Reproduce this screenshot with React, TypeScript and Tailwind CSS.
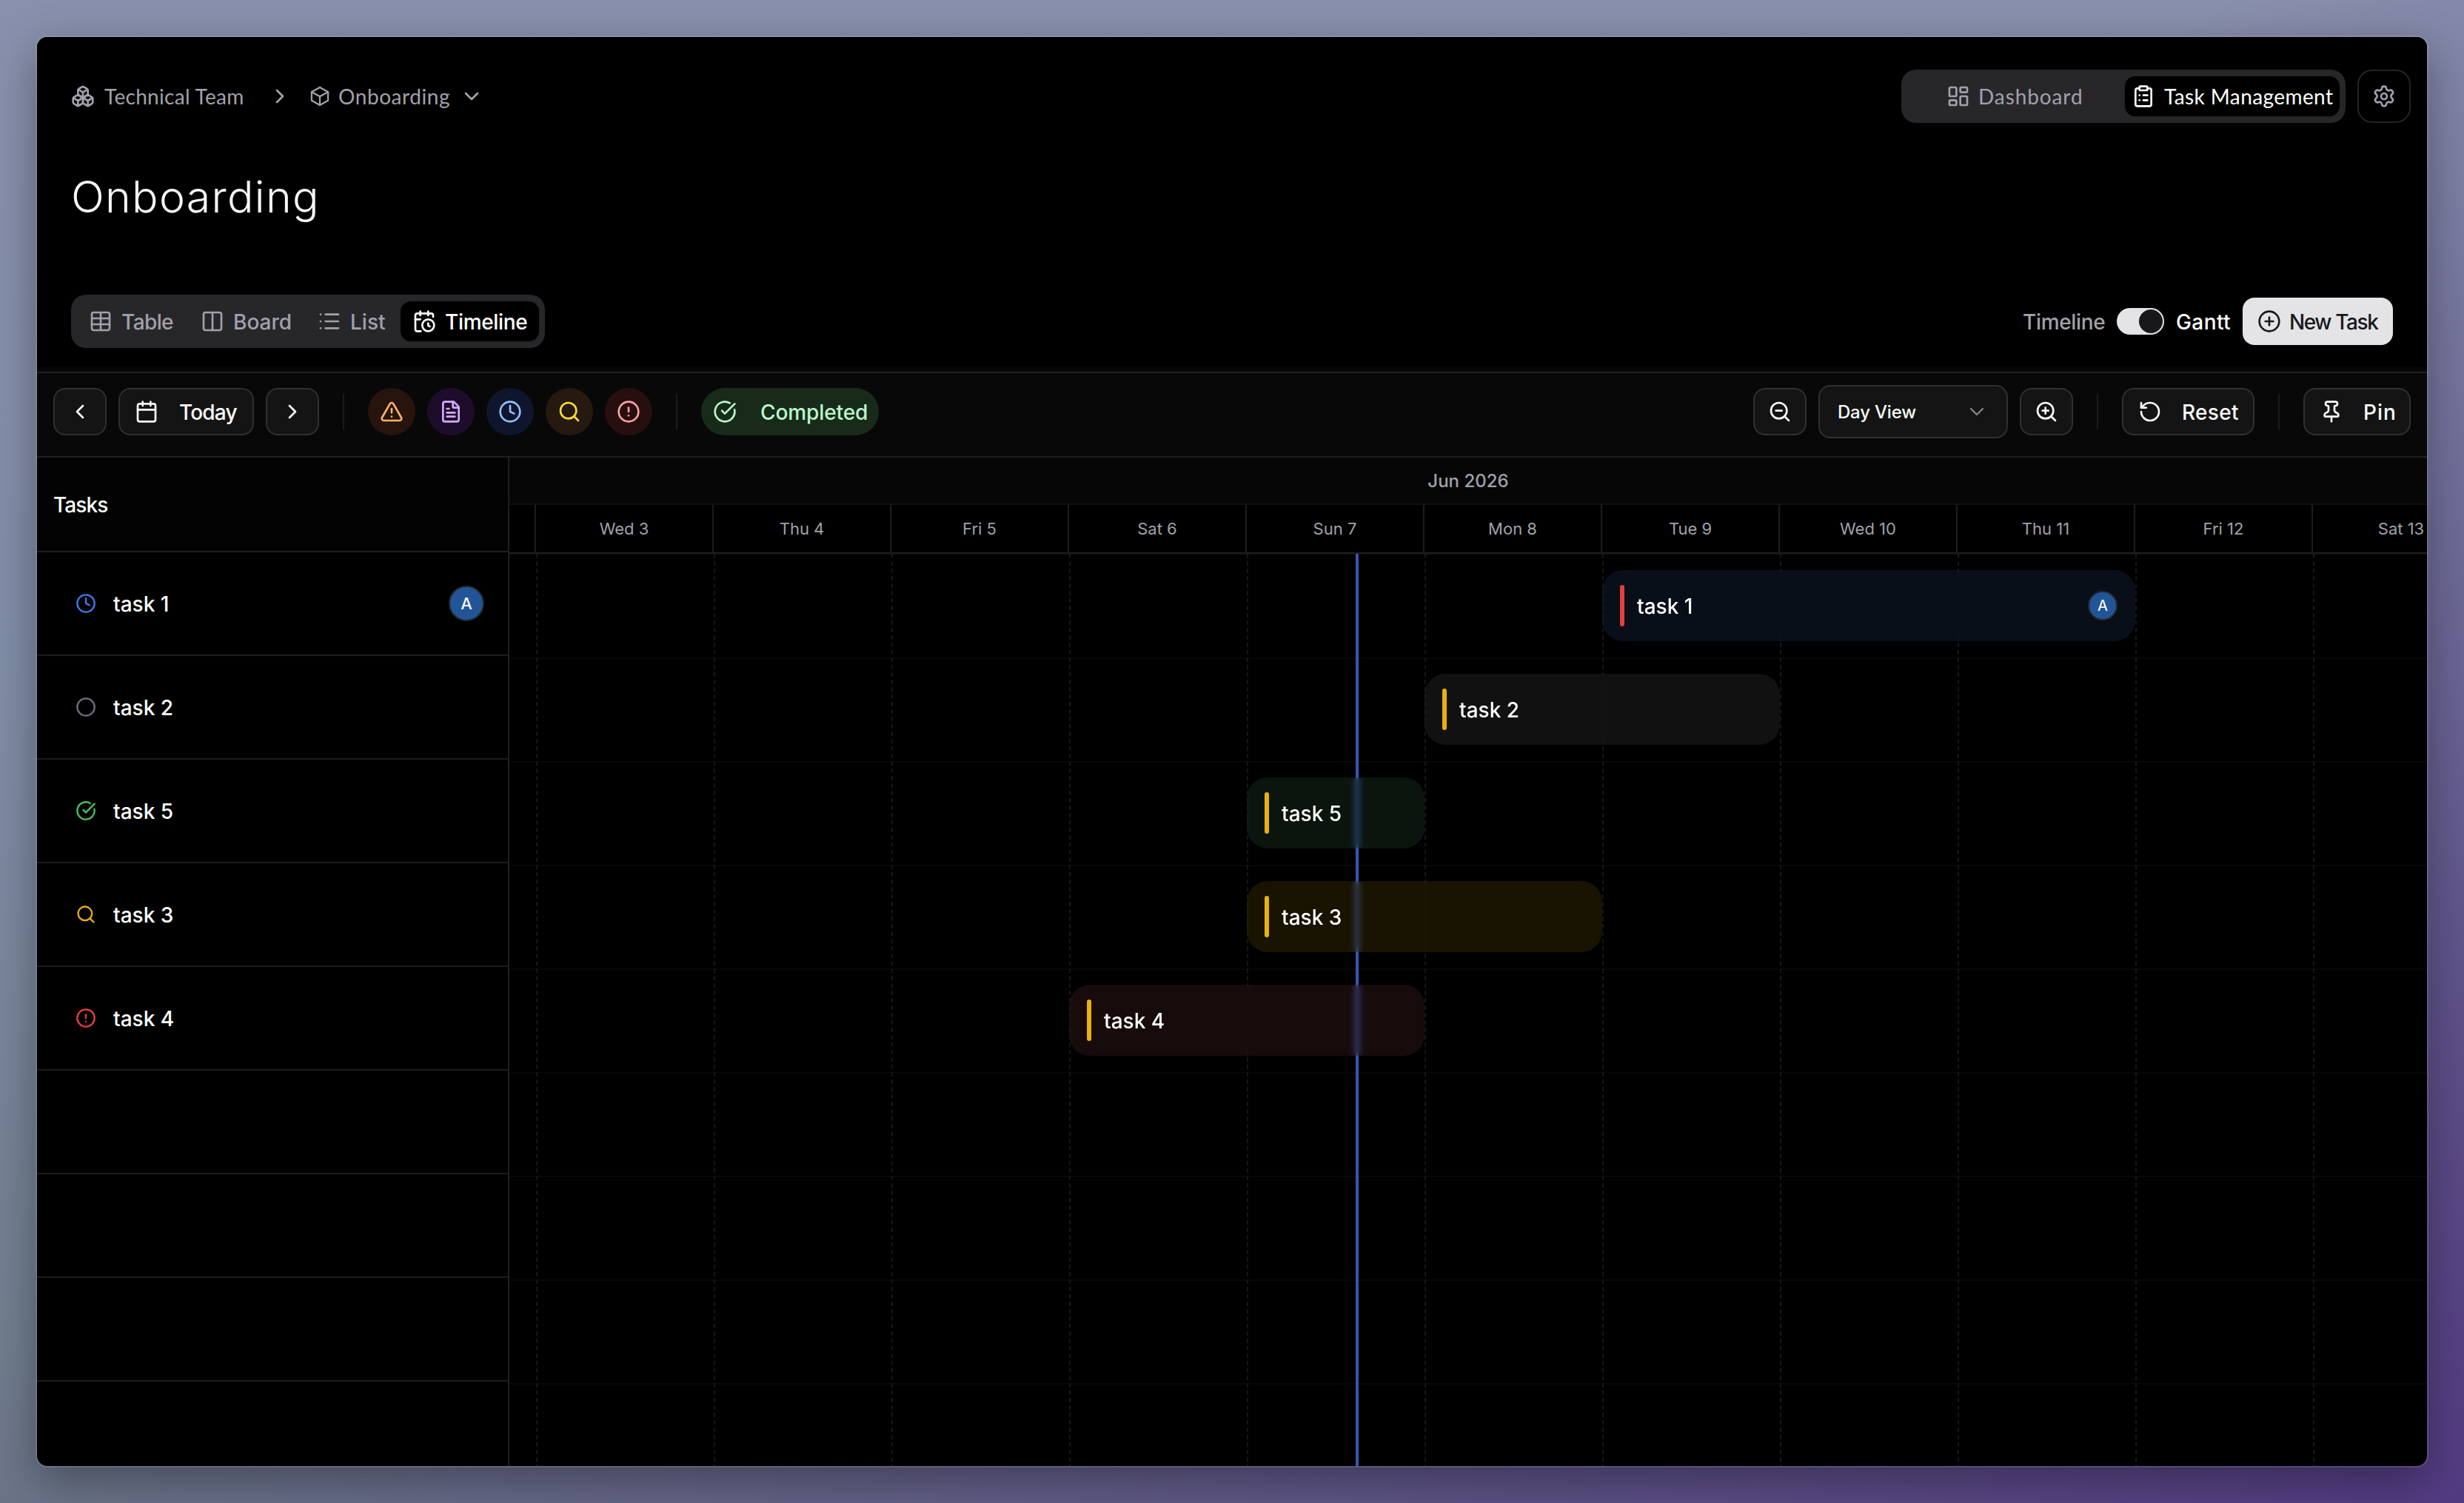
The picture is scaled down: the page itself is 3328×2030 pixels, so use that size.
import React from "react";
import {
  Boxes,
  Calendar,
  CalendarClock,
  ChevronDown,
  ChevronLeft,
  ChevronRight,
  Circle,
  CircleAlert,
  CircleCheckBig,
  CirclePlus,
  ClipboardList,
  Clock,
  Columns2,
  FileText,
  LayoutDashboard,
  List,
  Pin,
  RotateCcw,
  Search,
  Settings,
  Table,
  TriangleAlert,
  ZoomIn,
  ZoomOut,
} from "lucide-react";

const DAY_WIDTH = 240;
const ROW_HEIGHT = 140;

const days = [
  "Wed 3",
  "Thu 4",
  "Fri 5",
  "Sat 6",
  "Sun 7",
  "Mon 8",
  "Tue 9",
  "Wed 10",
  "Thu 11",
  "Fri 12",
  "Sat 13",
];

const tasks = [
  {
    name: "task 1",
    icon: Clock,
    iconColor: "text-[#3b7af0]",
    bar: "bg-[rgba(80,150,240,0.1)]",
    priority: "bg-[#e53e3e]",
    start: 6,
    length: 3,
    assignee: "A",
  },
  {
    name: "task 2",
    icon: Circle,
    iconColor: "text-[#6a7083]",
    bar: "bg-[rgba(165,165,165,0.1)]",
    priority: "bg-[#eab10c]",
    start: 5,
    length: 2,
  },
  {
    name: "task 5",
    icon: CircleCheckBig,
    iconColor: "text-[#48c45c]",
    bar: "bg-[rgba(105,210,140,0.1)]",
    priority: "bg-[#eab10c]",
    start: 4,
    length: 1,
  },
  {
    name: "task 3",
    icon: Search,
    iconColor: "text-[#eab10c]",
    bar: "bg-[rgba(250,190,10,0.1)]",
    priority: "bg-[#eab10c]",
    start: 4,
    length: 2,
  },
  {
    name: "task 4",
    icon: CircleAlert,
    iconColor: "text-[#e8403e]",
    bar: "bg-[rgba(235,110,120,0.1)]",
    priority: "bg-[#eab10c]",
    start: 3,
    length: 2,
  },
];

const emptyRows = [0, 1, 2, 3];

const filters = [
  { icon: TriangleAlert, style: "bg-[#27140c] text-[#fbb26a]" },
  { icon: FileText, style: "bg-[#1d0d2b] text-[#d6aafc]" },
  { icon: Clock, style: "bg-[#0f152d] text-[#92c0fc]" },
  { icon: Search, style: "bg-[#26190f] text-[#fbdd35]" },
  { icon: CircleAlert, style: "bg-[#280f0f] text-[#f9a2a4]" },
];

const CubeIcon = () => (
  <svg
    width="32"
    height="32"
    viewBox="0 0 24 24"
    fill="none"
    stroke="currentColor"
    strokeWidth="1.7"
    strokeLinecap="round"
    strokeLinejoin="round"
  >
    <path d="M12 3l8.3 4.7v8.6l-8.3 4.7l-8.3 -4.7v-8.6z" />
    <path d="M12 12.2l8.3 -4.5" />
    <path d="M12 12.2v8.8" />
    <path d="M12 12.2l-8.3 -4.5" />
  </svg>
);

const Separator = () => <div className="w-0.5 h-12 bg-[#1b1b1b]" />;

const Header = () => (
  <div className="h-[446px] pt-[44px] pl-[46px] bg-black">
    {/* Breadcrumb and page switch */}
    <div className="flex items-center h-[72px] pr-[22px] font-['Lato',sans-serif] text-[28px] text-[#a1a1aa]">
      <Boxes size={32} />
      <span className="w-[222px] pl-[13px] tracking-[0.3px]">Technical Team</span>
      <span className="w-[66px] pl-3">
        <ChevronRight size={32} />
      </span>
      <CubeIcon />
      <span className="w-[173px] pl-[9px] tracking-[0.57px]">Onboarding</span>
      <ChevronDown size={32} />
      <div className="ml-auto flex items-center w-[600px] h-[72px] rounded-[20px] bg-[#27272a]">
        <div className="flex items-center w-[302px] pl-[61px]">
          <LayoutDashboard size={32} />
          <span className="pl-[11px] tracking-[0.9px]">Dashboard</span>
        </div>
        <div className="flex items-center w-[290px] h-[54px] pl-[9px] rounded-[14px] bg-black text-white shadow-sm">
          <ClipboardList size={32} />
          <span className="pl-3 tracking-[0.41px]">Task Management</span>
        </div>
      </div>
      <div className="flex items-center justify-center ml-4 w-[72px] h-[72px] rounded-[20px] border-2 border-[#262223]">
        <Settings size={32} />
      </div>
    </div>

    <h1 className="h-[232px] pt-[64px] text-[59px] leading-[72px] font-[350] tracking-[1.3px] text-[#fafafa]">
      Onboarding
    </h1>

    {/* View tabs */}
    <div className="flex items-center justify-between h-[72px] pr-[46px] text-[28px] font-medium text-[#a1a1aa]">
      <div className="flex items-center gap-1 w-[640px] h-[72px] pl-2 rounded-[20px] bg-[#27272a]">
        <div className="flex items-center w-[147px] pl-4">
          <Table size={32} />
          <span className="pl-3 pt-0.5 tracking-[-0.6px]">Table</span>
        </div>
        <div className="flex items-center w-[154px] pl-4">
          <Columns2 size={32} />
          <span className="pl-3 pt-0.5">Board</span>
        </div>
        <div className="flex items-center w-[124px] pl-4">
          <List size={32} />
          <span className="pl-3 pt-0.5">List</span>
        </div>
        <div className="flex items-center w-[187px] h-[54px] pl-4 rounded-[14px] bg-black text-white shadow-sm">
          <CalendarClock size={32} />
          <span className="pl-3 pt-0.5 tracking-[-0.35px]">Timeline</span>
        </div>
      </div>
      <div className="flex items-center">
        <span className="w-[127px] pt-0.5 tracking-[-0.35px]">Timeline</span>
        <div className="flex items-center justify-end w-16 h-9 pr-0.5 rounded-full bg-[#e4e4e7]">
          <div className="w-8 h-8 rounded-full bg-[#18181b]" />
        </div>
        <span className="w-[106px] pl-4 pt-0.5 tracking-[0.4px] text-white">Gantt</span>
        <div className="flex items-center w-[203px] h-16 pl-5 rounded-[16px] bg-[#e4e4e7] text-[#18181b]">
          <CirclePlus size={32} />
          <span className="pl-[11px] pt-0.5 tracking-[-1.4px]">New Task</span>
        </div>
      </div>
    </div>
  </div>
);

const Toolbar = () => (
  <div className="flex items-center justify-between h-[116px] px-[22px] pb-[8px] border-y-2 border-[#1f1f1f] bg-[#080808] text-[28px] font-medium text-[#fafafa]">
    <div className="flex items-center">
      <div className="flex items-center justify-center w-[72px] h-16 rounded-[16px] border-2 border-[#303030] bg-[#141414]">
        <ChevronLeft size={32} />
      </div>
      <div className="flex items-center ml-4 w-[183px] h-16 pl-5 rounded-[16px] border-2 border-[#303030] bg-[#141414]">
        <Calendar size={32} />
        <span className="pl-7 pt-0.5 tracking-[-0.85px]">Today</span>
      </div>
      <div className="flex items-center justify-center mx-4 w-[72px] h-16 rounded-[16px] border-2 border-[#303030] bg-[#141414]">
        <ChevronRight size={32} />
      </div>
      <div className="flex items-center pl-4">
        <Separator />
      </div>
      <div className="flex items-center gap-4 px-8">
        {filters.map(({ icon: Icon, style }, i) => (
          <div
            key={i}
            className={`flex items-center justify-center w-16 h-16 rounded-full ${style}`}
          >
            <Icon size={32} />
          </div>
        ))}
      </div>
      <Separator />
      <div className="flex items-center ml-8 w-[240px] h-16 pl-4 rounded-full bg-[#182b1a] text-[#bdf6cc]">
        <CircleCheckBig size={32} />
        <span className="pl-8 pt-0.5 tracking-[-0.1px]">Completed</span>
      </div>
    </div>

    <div className="flex items-center">
      <div className="flex items-center justify-center w-[72px] h-16 rounded-[16px] border-2 border-[#303030] bg-[#141414]">
        <ZoomOut size={32} />
      </div>
      <div className="flex items-center justify-between mx-4 w-[256px] h-[72px] pl-6 pr-6 rounded-[16px] border-2 border-[#303030] bg-[#141414]">
        <span className="pt-0.5 text-[24px] tracking-[-0.2px]">Day View</span>
        <ChevronDown size={32} className="opacity-50" strokeWidth={1.7} />
      </div>
      <div className="flex items-center justify-center w-[72px] h-16 rounded-[16px] border-2 border-[#303030] bg-[#141414]">
        <ZoomIn size={32} />
      </div>
      <div className="px-8">
        <Separator />
      </div>
      <div className="flex items-center w-[179px] h-16 pl-5 rounded-[16px] border-2 border-[#303030] bg-[#141414]">
        <RotateCcw size={32} />
        <span className="pl-[27px] pt-0.5 tracking-[0.3px]">Reset</span>
      </div>
      <div className="px-8">
        <Separator />
      </div>
      <div className="flex items-center w-[145px] h-16 pl-5 rounded-[16px] border-2 border-[#303030] bg-[#141414]">
        <Pin size={32} />
        <span className="pl-[27px] pt-0.5 tracking-[1px]">Pin</span>
      </div>
    </div>
  </div>
);

const TaskList = () => (
  <div className="w-[638px] shrink-0 border-r-2 border-[#1f1f1f]">
    <div className="flex items-center h-[128px] pl-[22px] border-b-2 border-[#1f1f1f] bg-[#030303] text-[28px] font-medium tracking-[-0.9px] text-[#fafafa]">
      <span className="pt-0.5">Tasks</span>
    </div>
    {tasks.map(({ name, icon: Icon, iconColor, assignee }) => (
      <div
        key={name}
        className="flex items-center h-[140px] pl-[52px] pr-8 border-b-2 border-[#1c1c1c]"
      >
        <Icon size={28} className={iconColor} />
        <span className="pl-[23px] pt-0.5 text-[28px] font-medium text-white">{name}</span>
        {assignee && (
          <span className="flex items-center justify-center ml-auto w-12 h-12 rounded-full border-2 border-[#27272a] bg-[#215597] text-[22px] font-medium text-[#f4f4f5]">
            {assignee}
          </span>
        )}
      </div>
    ))}
    {emptyRows.map((row) => (
      <div key={row} className="h-[140px] border-b-2 border-[#1c1c1c]" />
    ))}
  </div>
);

const Timeline = () => (
  <div className="flex-1 min-w-0 overflow-hidden">
    <div className="flex items-center justify-center h-16 pt-0.5 border-b-2 border-[#101010] bg-[#060606] text-[24px] font-medium text-[#a1a1aa]">
      Jun 2026
    </div>
    <div className="flex h-[66px] border-b-2 border-[#202020] text-[22px] text-[#a1a1aa]">
      <div className="w-9 shrink-0 border-r-2 border-[#1d1d1d]" />
      {days.map((day) => (
        <div
          key={day}
          className="flex items-center justify-center w-[240px] shrink-0 border-r-2 border-[#1d1d1d]"
        >
          {day}
        </div>
      ))}
    </div>

    {/* Chart canvas */}
    <div className="relative h-[1232px] bg-[repeating-linear-gradient(to_bottom,#070707_0px,#070707_2px,transparent_2px,transparent_140px)]">
      <div className="flex h-full pl-9">
        {days.map((day) => (
          <div
            key={day}
            className="w-[240px] shrink-0 bg-[repeating-linear-gradient(to_bottom,#161616_0px,#161616_6px,transparent_6px,transparent_10px)] bg-[length:2px_100%] bg-no-repeat"
          />
        ))}
      </div>
      <div className="absolute top-0 left-[1143px] w-1 h-full bg-[#3059b4]" />
      {tasks.map((task, i) => (
        <div
          key={task.name}
          className={`absolute flex items-center h-24 px-6 rounded-[28px] backdrop-blur-[4px] ${task.bar}`}
          style={{
            left: 36 + task.start * DAY_WIDTH,
            top: 22 + i * ROW_HEIGHT,
            width: task.length * DAY_WIDTH,
          }}
        >
          <div className={`w-1.5 h-14 rounded-full ${task.priority}`} />
          <span className="pl-[17px] pt-0.5 text-[28px] font-medium text-white">{task.name}</span>
          {task.assignee && (
            <span className="flex items-center justify-center ml-auto w-10 h-10 rounded-full border-2 border-[#27272a] bg-[#215597] text-[20px] font-medium text-[#f4f4f5]">
              {task.assignee}
            </span>
          )}
        </div>
      ))}
    </div>
  </div>
);

const App = () => {
  return (
    <div className="w-[3328px] h-[2030px] p-[50px] overflow-hidden font-['Inter',sans-serif] bg-[linear-gradient(to_bottom_right,rgba(83,59,130,0)_45%,#533b82_100%),linear-gradient(to_bottom,#8990ad,#808da6_45%,#6d7a89)]">
      <div className="w-[3228px] h-[1930px] rounded-[14px] overflow-hidden bg-black shadow-[0_0_0_2px_rgba(255,255,255,0.12),0_18px_60px_rgba(0,0,0,0.36)]">
        <Header />
        <div className="h-[6px] bg-[#060606]" />
        <Toolbar />
        <div className="flex h-[1362px] overflow-hidden">
          <TaskList />
          <Timeline />
        </div>
      </div>
    </div>
  );
};

export default App;
